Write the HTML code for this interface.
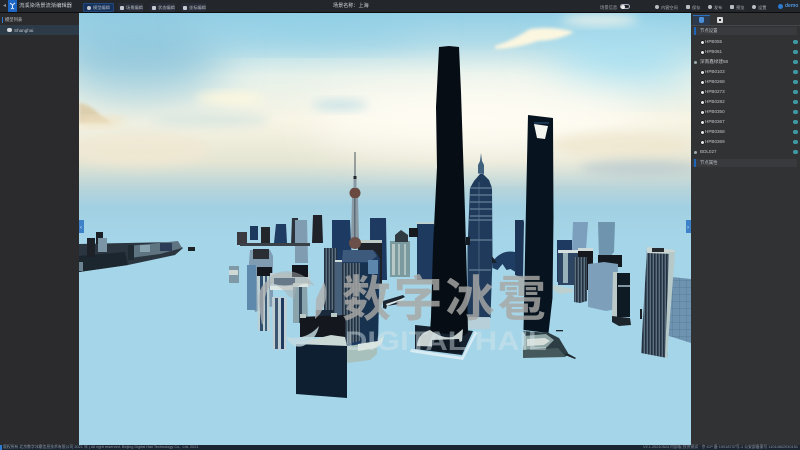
<!DOCTYPE html>
<html lang="zh"><head><meta charset="utf-8"><title>流溪染场景流渐编辑器</title>
<style>
*{box-sizing:border-box;margin:0;padding:0}
html,body{width:800px;height:450px;overflow:hidden;background:#2b2c2e;font-family:"Liberation Sans","Noto Sans CJK SC",sans-serif}
#top{position:absolute;left:0;top:0;width:800px;height:13px;background:#23262a;border-bottom:1px solid #0c0d0e;color:#aeb4bb;font-size:5px}
#top span,#top div{position:absolute;white-space:nowrap}
.tab{top:3px;height:9px;width:25px;background:#272c36;border-radius:1px;line-height:9px;padding-left:8px;color:#b5bbc4;font-size:4.2px}
.tab i{position:absolute;left:2px;top:2.5px;width:4px;height:4px;background:#c5cad0;border-radius:1px}
.tab.on{background:#17325a;border:1px solid #22497f;line-height:7px;padding-left:9px}
.tab.on i{left:3px;top:1.5px;border-radius:2px}
.act{top:3.5px;line-height:7px;font-size:4.2px;color:#aab0b7;padding-left:6px}
.act i{position:absolute;left:0;top:1.5px;width:4px;height:4px;background:#b9bec4;border-radius:1px}
#left{position:absolute;left:0;top:13px;width:79px;height:432px;background:#2b2b2d;color:#c0c5ca;font-size:5px}
#right{position:absolute;left:691px;top:13px;width:109px;height:432px;background:#313234;color:#c0c4c9;font-size:4.6px}
.row{position:absolute;left:0;width:109px;height:10px;line-height:10px;white-space:nowrap}
.row b{position:absolute;top:3.5px;width:3px;height:3px;border-radius:50%;background:#e6e8ea;box-shadow:0 0 0 .6px #111;left:10px}
.row u{position:absolute;right:2px;top:3px;width:5px;height:4px;border-radius:2px;background:#3f9aa5}
.row span{position:absolute;left:14px;text-decoration:none}
.row.g b{left:3px;width:3px;height:3px;background:#9aa;box-shadow:none}
.row.g span{left:9px}
.hd{position:absolute;left:1px;width:105px;height:8px;line-height:8px;padding-left:8px;font-size:4.4px;color:#b4b9be}
.hd:before{content:"";position:absolute;left:2px;top:0;width:1.6px;height:8px;background:#1d66b8}
#bot{position:absolute;left:0;top:445px;width:800px;height:5px;background:#1c2632;color:#8f979f;font-size:3.85px;line-height:5px;white-space:nowrap}
#bot span{position:absolute;top:0}
#view{position:absolute;left:79px;top:13px}
</style></head><body>
<svg id="view" width="612" height="432" viewBox="79 13 612 432" xmlns="http://www.w3.org/2000/svg">
<defs>
<linearGradient id="sky" x1="0" y1="0" x2="0" y2="1">
<stop offset="0" stop-color="#93cfe6"/><stop offset=".13" stop-color="#b0dbe8"/><stop offset=".28" stop-color="#e6f1ea"/><stop offset=".48" stop-color="#f7f4e4"/><stop offset=".66" stop-color="#e5e5d3"/><stop offset=".78" stop-color="#b7d4da"/><stop offset=".86" stop-color="#a2d0e3"/><stop offset="1" stop-color="#a5d5e8"/>
</linearGradient>
<filter id="b1" x="-50%" y="-50%" width="200%" height="200%"><feGaussianBlur stdDeviation="22"/></filter>
<filter id="b2" x="-50%" y="-50%" width="200%" height="200%"><feGaussianBlur stdDeviation="5"/></filter>
<filter id="b3" x="-50%" y="-50%" width="200%" height="200%"><feGaussianBlur stdDeviation="1.5"/></filter>
<pattern id="win" width="3" height="3" patternUnits="userSpaceOnUse"><rect width="3" height="3" fill="#5c7180"/><rect width="1.6" height="3" fill="#233140"/></pattern>
<pattern id="hb" width="7" height="7" patternUnits="userSpaceOnUse"><rect width="7" height="7" fill="#6d93b0"/><path d="M0 0H7M0 0V7" stroke="#4f7692" stroke-width=".7"/></pattern>
</defs>
<rect x="79" y="13" width="612" height="432" fill="#a5d5e8"/>
<rect x="79" y="13" width="612" height="225" fill="url(#sky)"/>
<!-- sky patches -->
<ellipse cx="140" cy="60" rx="85" ry="38" fill="#7fbdd8" filter="url(#b1)" opacity=".7"/>
<ellipse cx="310" cy="26" rx="110" ry="16" fill="#8fcfe6" filter="url(#b1)"/>
<ellipse cx="620" cy="60" rx="70" ry="26" fill="#a5dff2" filter="url(#b1)"/>
<ellipse cx="480" cy="118" rx="170" ry="34" fill="#fffdf4" filter="url(#b1)"/>
<ellipse cx="620" cy="145" rx="70" ry="13" fill="#efe7cf" filter="url(#b2)" opacity=".8"/>
<ellipse cx="640" cy="168" rx="60" ry="8" fill="#b8c9cf" filter="url(#b2)" opacity=".7"/>
<ellipse cx="340" cy="105" rx="28" ry="5" fill="#bcdce4" filter="url(#b2)" opacity=".8"/>
<ellipse cx="230" cy="98" rx="34" ry="5" fill="#fff8dd" filter="url(#b2)"/>
<ellipse cx="210" cy="120" rx="60" ry="7" fill="#dbe7e0" filter="url(#b2)"/>
<ellipse cx="140" cy="150" rx="70" ry="16" fill="#f0e8d3" filter="url(#b2)" opacity=".8"/>
<path d="M79 103Q90 104 100 115L112 123H79Z" fill="#dccfae" filter="url(#b3)"/>
<path d="M79 118H130L112 126H79Z" fill="#f1e2c2" filter="url(#b2)"/>
<path d="M495 46Q510 42 530 29Q555 26 574 32Q560 40 538 41Q515 49 495 49Z" fill="#fbf6e0" filter="url(#b3)"/>
<ellipse cx="600" cy="20" rx="38" ry="5" fill="#e9f1ea" filter="url(#b2)"/>

<!-- far-left skyline -->
<g>
<path d="M79 244L125 243L175 242L183 248L175 255L128 265L79 272Z" fill="#2a3540"/>
<path d="M128 246L178 241L182 248L160 254L130 258Z" fill="#5f7481"/>
<path d="M79 256L125 252L128 265L79 272Z" fill="#1c262f"/>
<rect x="79" y="262" width="4" height="9" fill="#6a8494"/>
<rect x="128" y="245" width="6" height="15" fill="#1f2a33"/>
<rect x="87" y="238" width="8" height="19" fill="#1e2127"/>
<rect x="96" y="232" width="7" height="12" fill="#1a1f26"/>
<rect x="98" y="238" width="9" height="14" fill="#7c95a6"/>
<rect x="140" y="245" width="10" height="7" fill="#8aa3b1"/>
<rect x="160" y="243" width="12" height="8" fill="#2c3c56"/>
<rect x="188" y="247" width="7" height="4" fill="#1d2227"/>
<rect x="229" y="266" width="10" height="17" fill="#7f9aa6"/>
<rect x="229" y="270" width="9" height="5" fill="#cfd9d6"/>
</g>

<!-- mid background skyline -->
<g>
<rect x="237" y="232" width="10" height="13" fill="#3a3a40"/>
<rect x="250" y="226" width="8" height="14" fill="#1d3a5e"/>
<rect x="261" y="227" width="9" height="18" fill="#23262b"/>
<path d="M276 224h10l1 19h-13z" fill="#1f3d63"/>
<path d="M292 218h6v27h-7z" fill="#2c3239"/>
<path d="M295 220h12l1 43h-13z" fill="#7f9cb0"/>
<path d="M313 215h9l1 28h-11z" fill="#1f2329"/>
<path d="M240 243h70v3h-70z" fill="#3a4148"/>
<path d="M332 220h18l2 42h-20z" fill="#1d3a62"/>
<path d="M370 218h16l1 62h-17z" fill="#1f3a60"/>
<rect x="358" y="240" width="24" height="44" fill="#1e2228"/>
<rect x="358" y="240" width="24" height="3" fill="#bcc9c6"/>
<rect x="390" y="241" width="20" height="36" fill="#7a9aa0"/>
<path d="M395 235l6-5 7 5v7h-13z" fill="#2f3a42"/>
<rect x="392" y="244" width="3" height="31" fill="#dfe7e0" opacity=".6"/>
<rect x="398" y="244" width="2" height="31" fill="#dfe7e0" opacity=".5"/>
<rect x="404" y="244" width="2" height="31" fill="#dfe7e0" opacity=".5"/>
<rect x="417" y="223" width="17" height="57" fill="#1e3b5f"/>
<rect x="416" y="222" width="19" height="2" fill="#bcd0d0"/>
<path d="M409 228h9v9h-9z" fill="#16191d"/>
</g>

<!-- Oriental Pearl -->
<g>
<rect x="354.500" y="152" width="1" height="30" fill="#4a5560"/>
<rect x="353.500" y="176" width="3" height="3" fill="#23272c"/>
<circle cx="355" cy="193" r="5.500" fill="#6a4a40"/>
<rect x="353.500" y="179" width="3" height="9" fill="#8a9aa5"/>
<path d="M352 198h6l1 40h-8z" fill="#8a9aa5"/>
<path d="M354 198h1.500v40h-1.500z" fill="#5d6c75"/>
<circle cx="355" cy="243" r="6" fill="#6a5048"/>
</g>

<!-- mid-front cluster -->
<g>
<path d="M250 250h20l3 6v50l-18 6-8-22z" fill="#7f9cb2"/>
<path d="M253 249h16v10h-16z" fill="#2a2d33"/>
<path d="M247 265h9v45h-9z" fill="#5f88ad"/>
<path d="M257 267h15v9h-15z" fill="#14181e"/>
<path d="M257 276h12l1 55h-12z" fill="#bcd0d4"/>
<rect x="260" y="276" width="3" height="55" fill="#2f4d6c"/>
<rect x="265" y="276" width="2" height="55" fill="#3a5a78"/>
<path d="M272 297h14l1 3-1 50-13-1z" fill="#bfcfd4"/>
<rect x="275" y="298" width="3" height="51" fill="#3c5570"/>
<rect x="281" y="298" width="3" height="51" fill="#1e3a60"/>
<path d="M270 273h40v14h-40z" fill="#bccdd2"/>
<path d="M292 265h16v12h-16z" fill="#12161c"/>
<path d="M274 278h21v6q-10 3-21 0z" fill="#24405f"/>
<path d="M270 286h24v4h-24z" fill="#dce6e4"/>
<path d="M293 284h14l1 39h-15z" fill="#8aa4ae"/>
<rect x="293" y="283" width="15" height="4" fill="#d9e3e0"/>
<rect x="299" y="287" width="3" height="36" fill="#34495b"/>
<path d="M324 248h13v67h-13z" fill="url(#win)"/>
<path d="M335 260h7v70h-7z" fill="#46607a"/>
<rect x="335" y="260" width="7" height="2" fill="#cfdadb"/>
<path d="M342 251h33l5 8-2 85-36 4z" fill="#1f3a61"/>
<path d="M343 250h30l4 6-8 6h-27z" fill="#3d5a7d"/>
<path d="M342 263h18v78l-18 4z" fill="url(#win)"/>
<path d="M360 263h18v78l-18 3z" fill="#17324f"/>
<path d="M368 260h10v14h-10z" fill="#5c86ac"/>
<path d="M316 310h17v10h-17z" fill="#1a2a3c"/>
<path d="M383 301l20-6 2 2-8 4 2 3-12 2-1 3-3-1z" fill="#1a2530"/>
<path d="M386 304l18-6 1 1-18 7z" fill="#dbe6e6"/>
</g>

<!-- Shanghai Tower -->
<g>
<path d="M415 325l58 6-11 24-47-6z" fill="#15212e"/>
<path d="M411 349l51 8 13-26 2 2-14 27-53-8z" fill="#d8ecf4"/>
<path d="M439 47l10-1 10 1 2 45 2 60 2 60 2 70 1 50-4 4-34-4 1-15 2-70 4-80-1-60z" fill="#060d14"/>
<path d="M417 344q2-11 13-14q12 9 23 7l10-8-1 12-13 6-32-1z" fill="#c9d1d0"/>
<path d="M432 340l27-1 3 14-30-2z" fill="#0e1822"/>
</g>

<!-- Jin Mao -->
<g>
<path d="M481 153l1 8 2 4v9l-6-.500v-8.500l2-4z" fill="#41627f"/>
<path d="M470 188l4-7 6-7h3l6 6 3 8 .5 70-2 60-23-1v-70z" fill="#1f3a5a"/>
<path d="M470 188h22M470 195h22M470 202h22M470 209h22M470 216h22M469 220h23M469 240h23M469 270h22" stroke="#93aec0" stroke-width=".8"/>
<path d="M479 182v135" stroke="#5e7d95" stroke-width=".6"/>
<path d="M466 237h4v8h-4z" fill="#141a21"/>
<rect x="468" y="317" width="22" height="12" fill="#b8ced6" opacity=".9"/>
</g>

<!-- back center -->
<path d="M515 220h8v-1l1 3-1 56-8-3z" fill="#1c3556"/>
<path d="M492 262q10-13 23-10l.5 20-5-3-4 1-4-6-5 6-5-2z" fill="#1f3d63"/>
<path d="M492 256v7h5z" fill="#19222a"/>

<!-- SWFC -->
<g>
<path d="M528 115l25 3 .5 100-1 80-4 35-25-3 2-100z" fill="#071420"/>
<path d="M534 124l14 2-3 13-8-1z" fill="#f5f6ef"/>
<rect x="534" y="122" width="15" height="1.800" fill="#1c3957"/>
<path d="M523 331l26 2 10 5 9 15-2 2 1 1-35 1-9-4 2-18z" fill="#2c3d44"/>
<path d="M524 336l22-2 8 6-8 8-22 2z" fill="#8ea6a5"/>
<path d="M527 339l18-1 5 3-6 4-17 1z" fill="#d7dfda"/>
<path d="M523 350l35-2 8 9-43 1z" fill="#45585c"/>
<path d="M565 355l10 4 1-1-9-5z" fill="#1c252b"/>
<rect x="556" y="330" width="7" height="1.300" fill="#1c252b"/>
</g>

<!-- right cluster -->
<g>
<path d="M573 222h15l-2 28h-14z" fill="#7b9fbc"/>
<path d="M598 222h17l-1 30-5 6h-10z" fill="#6f94ad"/>
<path d="M557 240h15v42h-15z" fill="#1f3a60"/>
<path d="M558 250h20v35h-20z" fill="#2c4563"/>
<path d="M558 250h20v3h-20z" fill="#d6e0e0"/>
<path d="M563 253h5v30h-5z" fill="#99b1bb"/>
<path d="M553 285l20 4v3l-12 2-8-4z" fill="#bcd0cf"/>
<path d="M578 248h15v42h-15z" fill="#16181e"/>
<rect x="578" y="248" width="15" height="3" fill="#cdd9d8"/>
<path d="M574 257h13v44l-7 2-6-1z" fill="url(#win)"/>
<path d="M598 255h24v12h-24z" fill="#14181f"/>
<path d="M588 264l16-2 14 2-1 45-11 2-18-4z" fill="#7d9fb9"/>
<path d="M613 272h5v50h-2l-4-6z" fill="#bbcac8"/>
<path d="M617 273h13v44h-13z" fill="#0e1a24"/>
<rect x="618" y="285" width="12" height="2" fill="#8197a1"/>
<path d="M612 316l18 2 1 7-12 1-7-4z" fill="#1c252c"/>
<path d="M672 277l19 2v64l-25-8z" fill="url(#hb)"/>
<path d="M647 249l26 3-6 106-26-5z" fill="url(#win)"/>
<path d="M647 247l28 3-1 4-27-1z" fill="#c9d6d4"/>
<path d="M652 248h12v4h-12z" fill="#262b30"/>
<path d="M669 252l6 0-8 106h-2z" fill="#b6c9c8"/>
<path d="M640 309h2v10h-2z" fill="#1b2026"/>
</g>

<!-- front block -->
<g>
<path d="M347 346l30-4v12l-7 6-23 3z" fill="#a8c0bc"/>
<path d="M358 344l20-3 6-5-2 7-6 5-18 3z" fill="#dbe5df"/>
<path d="M300 317l45-2v22h-45z" fill="#14171d"/>
<path d="M300 314h6v4h-6zM331 313h6v4h-6z" fill="#b9c9c6"/>
<path d="M296 342l19-3 16-4 14 2 2 9-51 1z" fill="#cbd9d6"/>
<path d="M296 344l51 2v52l-51-4z" fill="#0f1f32"/>
</g>

<!-- watermark -->
<g fill="#a8a8a6" opacity=".82">
<path d="M269 280q-12 6-10 26l3 19q3-4 2-16q0-17 8-26z" fill="#aeb2b3"/>
<path d="M268 278q20-15 43 3l4 5q-20-8-21 13l-6-3q-6-10-20-14z" fill="#aeb2b3" opacity=".6"/>
<path d="M324 282q6 15-4 32l-5 5q1-10 1-20z" fill="#aeb2b3"/>
<path d="M286 337q20 4 33-11q-3 14-16 20q-11 3-17-9z" fill="#c5dbe2"/>
<text x="342" y="316" font-size="49" font-weight="700" font-family="Liberation Sans,Noto Sans CJK SC,sans-serif" textLength="204" lengthAdjust="spacing">数字冰雹</text>
</g>
<text x="345" y="350" font-size="27" font-weight="700" fill="#d7e7ec" opacity=".45" font-family="Liberation Sans,sans-serif" textLength="202" lengthAdjust="spacingAndGlyphs">DIGITAL HAIL</text>

<!-- side handles -->
<rect x="79" y="220" width="5" height="13" fill="#3d82c8"/>
<rect x="686" y="220" width="5" height="13" fill="#3d82c8"/>
<text x="80" y="229" font-size="6" fill="#cfe3f5">‹</text>
<text x="687" y="229" font-size="6" fill="#cfe3f5">›</text>
</svg>

<div id="top">
<span style="left:3px;top:3px;color:#8d939a;font-size:6px;line-height:7px">◂</span>
<div style="left:8px;top:0;width:9px;height:12px;background:#1e66c4"><svg width="9" height="12" style="position:absolute;left:0;top:0"><path d="M2 3l2.500 2L7 3M4.500 5v3M3 9l1.500-1L6 9" stroke="#dfeeff" fill="none" stroke-width="1"/></svg></div>
<span style="left:19px;top:3px;line-height:7px;font-size:5.300px;color:#c4c9ce">流溪染场景流渐编辑器</span>
<div class="tab on" style="left:83px;width:31px"><i></i>模型编辑</div>
<div class="tab" style="left:118px"><i></i>场景编辑</div>
<div class="tab" style="left:150px"><i></i>状态编辑</div>
<div class="tab" style="left:181px"><i></i>坐标编辑</div>
<span style="left:333px;top:3px;line-height:7px;font-size:5.100px;color:#d0d4d8">场景名称：上海</span>
<span style="left:600px;top:3.500px;line-height:7px;font-size:4.300px;color:#9ea4ab">场景信息</span>
<div style="left:620px;top:4px;width:10px;height:5px;border:.7px solid #aab;border-radius:3px"></div>
<div style="left:620.500px;top:4.500px;width:4px;height:4px;background:#eee;border-radius:50%"></div>
<div class="act" style="left:655px"><i style="border-radius:50%"></i>内客空间</div>
<div class="act" style="left:686px"><i></i>保存</div>
<div class="act" style="left:708px"><i style="border-radius:50%"></i>发布</div>
<div class="act" style="left:730px"><i></i>预览</div>
<div class="act" style="left:752px"><i style="border-radius:50%"></i>设置</div>
<div style="left:778px;top:4px;width:5px;height:5px;background:#2d7bd0;border-radius:50%"></div>
<span style="left:785px;top:3px;line-height:7px;font-size:5px;color:#4f93dc;font-weight:700">demo</span>
</div>

<div id="left">
<div style="position:absolute;left:2px;top:4px;width:1.300px;height:6px;background:#2d7bd0"></div>
<span style="position:absolute;left:5px;top:4px;line-height:6px;font-size:4.300px">模型列表</span>
<div style="position:absolute;left:0;top:12px;width:79px;height:10px;background:#2d3a48"></div>
<div style="position:absolute;left:7px;top:15px;width:5px;height:4px;background:#d4d8dc;border-radius:2px"></div>
<span style="position:absolute;left:14px;top:14px;line-height:7px;font-size:4.600px;color:#bcc3ca">Shanghai</span>
</div>

<div id="right">
<div style="position:absolute;left:2px;top:2px;width:17px;height:10px;background:#2b3a4d;border-top:1px solid #2a6fc0"></div>
<div style="position:absolute;left:8px;top:4px;width:5px;height:6px;background:#4b8fd8;border-radius:1px 1px 2px 2px"></div>
<div style="position:absolute;left:26px;top:4px;width:6px;height:6px;background:#d9dcdf;border-radius:1px"><div style="position:absolute;left:2px;top:2px;width:2px;height:2px;background:#333"></div></div>
<div style="position:absolute;left:0;top:12px;width:109px;height:.7px;background:#45474a"></div>
<div class="hd" style="top:14px;background:#383a3d">节点设置</div>
<div class="row" style="top:24px"><b></b><span>HPB055</span><u></u></div>
<div class="row" style="top:34px"><b></b><span>HPB061</span><u></u></div>
<div class="row g" style="top:44px"><b></b><span>深南鑫绿建58</span><u></u></div>
<div class="row" style="top:54px"><b></b><span>HPB0103</span><u></u></div>
<div class="row" style="top:64px"><b></b><span>HPB0268</span><u></u></div>
<div class="row" style="top:74px"><b></b><span>HPB0273</span><u></u></div>
<div class="row" style="top:84px"><b></b><span>HPB0282</span><u></u></div>
<div class="row" style="top:94px"><b></b><span>HPB0350</span><u></u></div>
<div class="row" style="top:104px"><b></b><span>HPB0367</span><u></u></div>
<div class="row" style="top:114px"><b></b><span>HPB0368</span><u></u></div>
<div class="row" style="top:124px"><b></b><span>HPB0369</span><u></u></div>
<div class="row g" style="top:134px"><b></b><span>BDL027</span><u></u></div>
<div class="hd" style="top:146px;background:#383a3d">节点属性</div>
</div>

<div id="bot">
<span style="left:0;width:1.500px;height:5px;background:#2d7bd0"></span>
<span style="left:3px">版权所有 北京数字冰雹信息技术有限公司 2021 年 | All right reserved. Beijing Digital Hail Technology Co., Ltd. 2021</span>
<span style="right:2px">V2.1.20210524 内部版 仅供测试 · 京 ICP 备 19018737号-1 公安部备案号 11010802030151</span>
</div>
</body></html>
